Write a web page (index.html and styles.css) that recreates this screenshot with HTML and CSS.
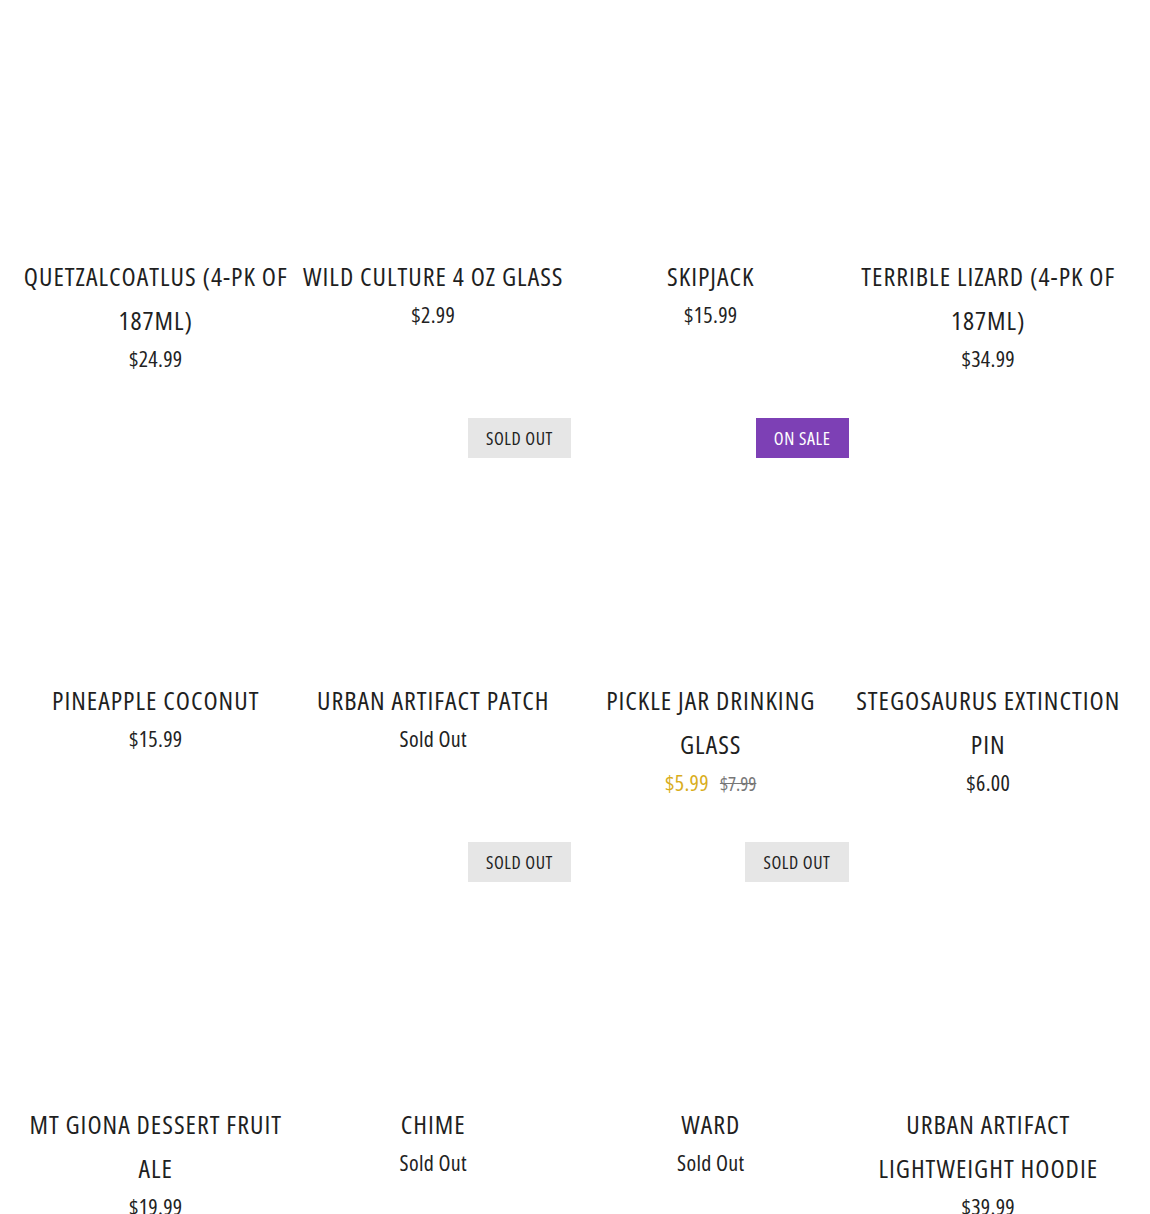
FILE: index.html
```html
<!DOCTYPE html>
<html lang="en">
<head>
<meta charset="utf-8">
<title>Products</title>
<link rel="stylesheet" href="styles.css">
</head>
<body>
<div class="grid">
  <div class="card">
    <div class="media"></div>
    <div class="title">Quetzalcoatlus (4-pk of 187ml)</div>
    <div class="price">$24.99</div>
  </div>
  <div class="card">
    <div class="media"></div>
    <div class="title">Wild Culture 4 oz Glass</div>
    <div class="price">$2.99</div>
  </div>
  <div class="card">
    <div class="media"></div>
    <div class="title">Skipjack</div>
    <div class="price">$15.99</div>
  </div>
  <div class="card">
    <div class="media"></div>
    <div class="title">Terrible Lizard (4-pk of 187ml)</div>
    <div class="price">$34.99</div>
  </div>

  <div class="card">
    <div class="media"></div>
    <div class="title">Pineapple Coconut</div>
    <div class="price">$15.99</div>
  </div>
  <div class="card">
    <div class="media"><span class="badge badge-sold">Sold Out</span></div>
    <div class="title">Urban Artifact Patch</div>
    <div class="price">Sold Out</div>
  </div>
  <div class="card">
    <div class="media"><span class="badge badge-sale">On Sale</span></div>
    <div class="title">Pickle Jar Drinking Glass</div>
    <div class="price"><span class="sale">$5.99</span><span class="compare">$7.99</span></div>
  </div>
  <div class="card">
    <div class="media"></div>
    <div class="title">Stegosaurus Extinction Pin</div>
    <div class="price">$6.00</div>
  </div>

  <div class="card">
    <div class="media"></div>
    <div class="title">Mt Giona Dessert Fruit Ale</div>
    <div class="price">$19.99</div>
  </div>
  <div class="card">
    <div class="media"><span class="badge badge-sold">Sold Out</span></div>
    <div class="title">Chime</div>
    <div class="price">Sold Out</div>
  </div>
  <div class="card">
    <div class="media"><span class="badge badge-sold">Sold Out</span></div>
    <div class="title">Ward</div>
    <div class="price">Sold Out</div>
  </div>
  <div class="card">
    <div class="media"></div>
    <div class="title">Urban Artifact Lightweight Hoodie</div>
    <div class="price">$39.99</div>
  </div>
</div>
</body>
</html>
```

FILE: styles.css
```css
html, body {
  margin: 0;
  padding: 0;
  background: #ffffff;
}

body {
  font-family: "Open Sans", "Noto Sans", sans-serif;
  font-stretch: 75%;
  color: #1f1f1f;
  overflow: hidden;
}

.grid {
  display: grid;
  grid-template-columns: repeat(4, 277.5px);
  row-gap: 48px;
  margin: -6px 0 0 17px;
}

.card {
  display: flex;
  flex-direction: column;
  align-items: center;
  text-align: center;
}

.media {
  position: relative;
  align-self: stretch;
  height: 260px;
}

.badge {
  position: absolute;
  top: 0;
  right: 1px;
  height: 40px;
  line-height: 40px;
  padding: 0 18px;
  font-size: 18px;
  font-weight: 500;
  letter-spacing: 0.6px;
  text-transform: uppercase;
}

.badge-sold {
  background: #e6e6e6;
  color: #222222;
}

.badge-sale {
  background: #7d40b5;
  color: #ffffff;
}

.title {
  padding: 0 5px;
  font-size: 26px;
  font-weight: 500;
  line-height: 44px;
  letter-spacing: 1px;
  text-transform: uppercase;
  color: #1f1f1f;
}

.price {
  margin-top: 4px;
  font-size: 22px;
  font-weight: 500;
  line-height: 24px;
  letter-spacing: 0.3px;
  color: #222222;
}

.sale {
  color: #d9ad1c;
}

.compare {
  margin-left: 11px;
  font-size: 19px;
  line-height: 16px;
  letter-spacing: 0;
  color: #777777;
  text-decoration: line-through;
}
```
